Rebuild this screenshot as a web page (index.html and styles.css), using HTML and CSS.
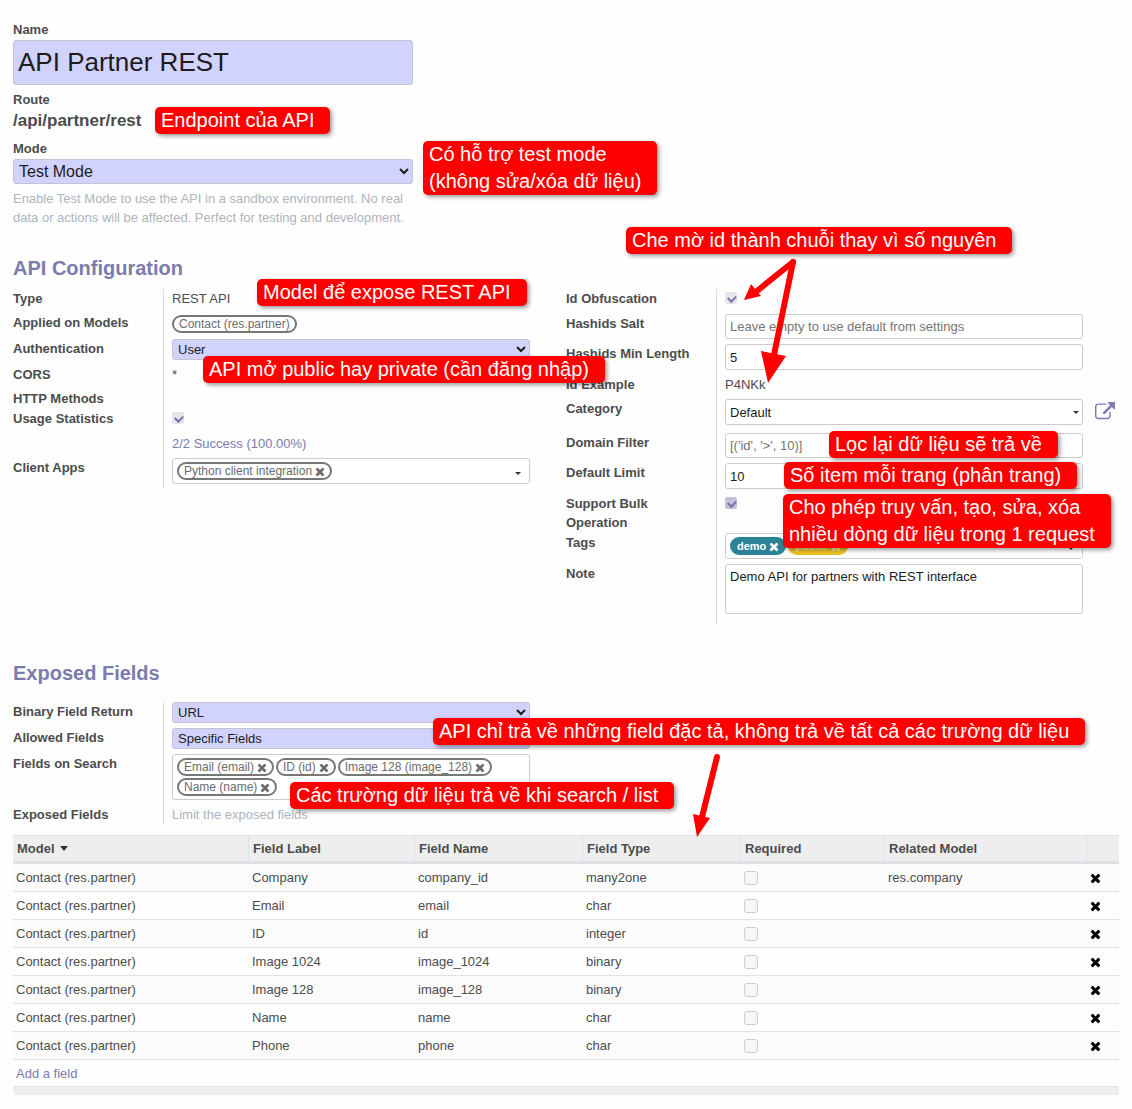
FILE: index.html
```html
<!DOCTYPE html>
<html lang="en">
  <head>
    <meta charset="UTF-8" />
    <meta name="viewport" content="width=device-width, initial-scale=1.0" />
    <title>API Partner REST</title>
    <link rel="stylesheet" href="styles.css" />
  </head>

  <body>
    <svg class="sprite" aria-hidden="true">
      <symbol id="times" viewBox="0 0 1408 1792">
        <path d="M1298 1322q0 40-28 68l-136 136q-28 28-68 28t-68-28l-294-294-294 294q-28 28-68 28t-68-28l-136-136q-28-28-28-68t28-68l294-294-294-294q-28-28-28-68t28-68l136-136q28-28 68-28t68 28l294 294 294-294q28-28 68-28t68 28l136 136q28 28 28 68t-28 68l-294 294 294 294q28 28 28 68z" />
      </symbol>
      <symbol id="external" viewBox="0 0 1792 1792">
        <path d="M1408 928v320q0 119-84.500 203.500t-203.500 84.500h-832q-119 0-203.500-84.500t-84.500-203.500v-832q0-119 84.500-203.500t203.500-84.500h704q14 0 23 9t9 23v64q0 14-9 23t-23 9h-704q-66 0-113 47t-47 113v832q0 66 47 113t113 47h832q66 0 113-47t47-113v-320q0-14 9-23t23-9h64q14 0 23 9t9 23zm384-864v512q0 26-19 45t-45 19-45-19l-176-176-652 652q-10 10-23 10t-23-10l-114-114q-10-10-10-23t10-23l652-652-176-176q-19-19-19-45t19-45 45-19h512q26 0 45 19t19 45z" />
      </symbol>
    </svg>

    <main class="sheet">
      <!-- title block -->
      <section class="title">
        <label for="name">Name</label>
        <input class="name" id="name" type="text" value="API Partner REST" />
        <span class="caption">Route</span>
        <div class="route">/api/partner/rest</div>
        <label for="mode">Mode</label>
        <select class="mode" id="mode">
          <option>Test Mode</option>
          <option>Production</option>
        </select>
        <p class="hint">
          Enable Test Mode to use the API in a sandbox environment. No real data
          or actions will be affected. Perfect for testing and development.
        </p>
        <div class="note note-endpoint">Endpoint của API</div>
        <div class="note note-mode">Có hỗ trợ test mode<br />(không sửa/xóa dữ liệu)</div>
      </section>

      <h2>API Configuration</h2>
      <section class="groups config">
        <div class="group">
          <div class="row">
            <span class="label">Type</span>
            <div class="value">REST API</div>
          </div>
          <div class="row">
            <span class="label">Applied on Models</span>
            <div class="value"><span class="tag">Contact (res.partner)</span></div>
          </div>
          <div class="row">
            <label class="label" for="auth">Authentication</label>
            <div class="value">
              <select class="field required" id="auth">
                <option>User</option>
                <option>Public</option>
              </select>
            </div>
          </div>
          <div class="row">
            <span class="label">CORS</span>
            <div class="value">*</div>
          </div>
          <div class="row empty">
            <span class="label">HTTP Methods</span>
            <div class="value"></div>
          </div>
          <div class="row">
            <label class="label" for="stats">Usage Statistics</label>
            <div class="value check"><input type="checkbox" id="stats" checked disabled /></div>
          </div>
          <div class="row">
            <span class="label"></span>
            <div class="value"><a href="#">2/2 Success (100.00%)</a></div>
          </div>
          <div class="row">
            <label class="label" for="clients">Client Apps</label>
            <div class="value">
              <div class="tags">
                <span class="tag">Python client integration <button aria-label="Remove"><svg><use href="#times" /></svg></button></span>
                <input type="text" id="clients" />
                <i class="caret"></i>
              </div>
            </div>
          </div>
          <div class="note note-model">Model để expose REST API</div>
          <div class="note note-auth">API mở public hay private (cần đăng nhập)</div>
        </div>

        <div class="group">
          <div class="row">
            <label class="label" for="obfuscation">Id Obfuscation</label>
            <div class="value check"><input type="checkbox" id="obfuscation" checked disabled /></div>
          </div>
          <div class="row">
            <label class="label" for="salt">Hashids Salt</label>
            <div class="value">
              <input class="field" type="text" id="salt" placeholder="Leave empty to use default from settings" />
            </div>
          </div>
          <div class="row">
            <label class="label" for="length">Hashids Min Length</label>
            <div class="value"><input class="field tall" type="text" id="length" value="5" /></div>
          </div>
          <div class="row">
            <span class="label">Id Example</span>
            <div class="value">P4NKk</div>
          </div>
          <div class="row category">
            <label class="label" for="category">Category</label>
            <div class="value">
              <input class="field tall" type="text" id="category" value="Default" />
              <i class="caret"></i>
              <button class="external" aria-label="Open category"><svg><use href="#external" /></svg></button>
            </div>
          </div>
          <div class="row">
            <label class="label" for="domain">Domain Filter</label>
            <div class="value">
              <input class="field" type="text" id="domain" placeholder="[('id', '&gt;', 10)]" />
            </div>
          </div>
          <div class="row">
            <label class="label" for="limit">Default Limit</label>
            <div class="value"><input class="field tall" type="text" id="limit" value="10" /></div>
          </div>
          <div class="row bulk">
            <label class="label" for="bulk">Support Bulk Operation</label>
            <div class="value check"><input class="active" type="checkbox" id="bulk" checked /></div>
          </div>
          <div class="row">
            <label class="label" for="tags">Tags</label>
            <div class="value">
              <div class="tags">
                <span class="tag teal">demo <button aria-label="Remove"><svg><use href="#times" /></svg></button></span>
                <span class="tag yellow">public <button aria-label="Remove"><svg><use href="#times" /></svg></button></span>
                <input type="text" id="tags" />
                <i class="caret"></i>
              </div>
            </div>
          </div>
          <div class="row last">
            <label class="label" for="note">Note</label>
            <div class="value">
              <textarea class="field" id="note">Demo API for partners with REST interface</textarea>
            </div>
          </div>

          <div class="note note-obfuscation">Che mờ id thành chuỗi thay vì số nguyên</div>
          <div class="note note-domain">Lọc lại dữ liệu sẽ trả về</div>
          <div class="note note-limit">Số item mỗi trang (phân trang)</div>
          <div class="note note-bulk">Cho phép truy vấn, tạo, sửa, xóa<br />nhiều dòng dữ liệu trong 1 request</div>
          <svg class="arrow arrow-id" viewBox="0 0 66 130">
            <path class="shaft" d="M53 7 L17 36" />
            <path d="M4 45 L11 29 L21 41 Z" />
            <path class="shaft" d="M53 7 L34 100" />
            <path d="M28 128 L21 96 L46 101 Z" />
          </svg>
        </div>
      </section>

      <h2 class="exposed-title">Exposed Fields</h2>
      <section class="groups exposed">
        <div class="group">
          <div class="row">
            <label class="label" for="binary">Binary Field Return</label>
            <div class="value">
              <select class="field required" id="binary">
                <option>URL</option>
                <option>Base64</option>
              </select>
            </div>
          </div>
          <div class="row">
            <label class="label" for="allowed">Allowed Fields</label>
            <div class="value">
              <select class="field required" id="allowed">
                <option>Specific Fields</option>
                <option>All Fields</option>
              </select>
            </div>
          </div>
          <div class="row">
            <label class="label" for="search">Fields on Search</label>
            <div class="value">
              <div class="tags">
                <span class="tag">Email (email) <button aria-label="Remove"><svg><use href="#times" /></svg></button></span>
                <span class="tag">ID (id) <button aria-label="Remove"><svg><use href="#times" /></svg></button></span>
                <span class="tag">Image 128 (image_128) <button aria-label="Remove"><svg><use href="#times" /></svg></button></span>
                <span class="tag">Name (name) <button aria-label="Remove"><svg><use href="#times" /></svg></button></span>
                <input type="text" id="search" />
                <i class="caret"></i>
              </div>
            </div>
          </div>
          <div class="row empty">
            <span class="label">Exposed Fields</span>
            <div class="value muted">Limit the exposed fields</div>
          </div>
        </div>
        <div class="note note-allowed">API chỉ trả về những field đặc tả, không trả về tất cả các trường dữ liệu</div>
        <div class="note note-search">Các trường dữ liệu trả về khi search / list</div>
        <svg class="arrow arrow-fields" viewBox="0 0 36 90">
          <path class="shaft" d="M27 6 L12 66" />
          <path d="M7 86 L3 63 L20 67 Z" />
        </svg>
      </section>

      <table>
        <colgroup>
          <col class="c-model" />
          <col class="c-label" />
          <col class="c-name" />
          <col class="c-type" />
          <col class="c-required" />
          <col />
          <col class="c-remove" />
        </colgroup>
        <thead>
          <tr>
            <th>Model <i class="caret sort"></i></th>
            <th>Field Label</th>
            <th>Field Name</th>
            <th>Field Type</th>
            <th>Required</th>
            <th>Related Model</th>
            <th></th>
          </tr>
        </thead>
        <tbody>
          <tr>
            <td>Contact (res.partner)</td>
            <td>Company</td>
            <td>company_id</td>
            <td>many2one</td>
            <td><input type="checkbox" aria-label="Required" disabled /></td>
            <td>res.company</td>
            <td><button aria-label="Delete"><svg><use href="#times" /></svg></button></td>
          </tr>
          <tr>
            <td>Contact (res.partner)</td>
            <td>Email</td>
            <td>email</td>
            <td>char</td>
            <td><input type="checkbox" aria-label="Required" disabled /></td>
            <td></td>
            <td><button aria-label="Delete"><svg><use href="#times" /></svg></button></td>
          </tr>
          <tr>
            <td>Contact (res.partner)</td>
            <td>ID</td>
            <td>id</td>
            <td>integer</td>
            <td><input type="checkbox" aria-label="Required" disabled /></td>
            <td></td>
            <td><button aria-label="Delete"><svg><use href="#times" /></svg></button></td>
          </tr>
          <tr>
            <td>Contact (res.partner)</td>
            <td>Image 1024</td>
            <td>image_1024</td>
            <td>binary</td>
            <td><input type="checkbox" aria-label="Required" disabled /></td>
            <td></td>
            <td><button aria-label="Delete"><svg><use href="#times" /></svg></button></td>
          </tr>
          <tr>
            <td>Contact (res.partner)</td>
            <td>Image 128</td>
            <td>image_128</td>
            <td>binary</td>
            <td><input type="checkbox" aria-label="Required" disabled /></td>
            <td></td>
            <td><button aria-label="Delete"><svg><use href="#times" /></svg></button></td>
          </tr>
          <tr>
            <td>Contact (res.partner)</td>
            <td>Name</td>
            <td>name</td>
            <td>char</td>
            <td><input type="checkbox" aria-label="Required" disabled /></td>
            <td></td>
            <td><button aria-label="Delete"><svg><use href="#times" /></svg></button></td>
          </tr>
          <tr>
            <td>Contact (res.partner)</td>
            <td>Phone</td>
            <td>phone</td>
            <td>char</td>
            <td><input type="checkbox" aria-label="Required" disabled /></td>
            <td></td>
            <td><button aria-label="Delete"><svg><use href="#times" /></svg></button></td>
          </tr>
          <tr>
            <td class="add" colspan="7"><a href="#">Add a field</a></td>
          </tr>
        </tbody>
        <tfoot>
          <tr>
            <td colspan="7"></td>
          </tr>
        </tfoot>
      </table>
    </main>
  </body>
</html>
```
FILE: styles.css
```css
* {
  margin: 0;
  padding: 0;
  box-sizing: border-box;
}

body {
  color: #4c4c4c;
  background: #fefefe;
  font: 13px/19px "Liberation Sans", Arial, sans-serif;
}

input,
select,
textarea {
  font: inherit;
  color: #1c1c1c;
}

button {
  border: none;
  background: none;
  color: inherit;
  cursor: pointer;
}

a {
  color: #7c7bad;
  text-decoration: none;
}

svg {
  fill: currentColor;
}

.sprite {
  display: none;
}

.sheet {
  padding: 20px 13px 14px;
}

/* title block */
.title {
  position: relative;
  width: 400px;
  display: flex;
  flex-direction: column;
}

.title label,
.caption {
  font-weight: bold;
}

.name {
  height: 45px;
  margin: 1px 0 5px;
  padding: 0 4px;
  font-size: 26px;
  border: 1px solid #c3c3d6;
  border-radius: 3px;
  background: #d2d2ff;
}

.route {
  margin: 2px 0 8px;
  font-size: 17px;
  line-height: 20px;
  font-weight: bold;
}

.mode {
  height: 25px;
  margin: 1px 0 5px;
  padding-left: 1px;
  font-size: 16px;
  border: 1px solid #c3c3d6;
  border-radius: 3px;
  background: #d2d2ff;
}

.hint,
.muted {
  color: #adb5bd;
}

h2 {
  margin: 29px 0 9px;
  color: #7c7bad;
  font-size: 20px;
  line-height: 24px;
}

h2.exposed-title {
  margin: 37px 0 17px;
}

/* form groups */
.groups {
  position: relative;
  display: grid;
  grid-template-columns: 1fr 1fr;
  align-items: start;
}

.group {
  position: relative;
}

.row {
  display: grid;
  grid-template-columns: 151px 1fr;
}

.row.empty {
  min-height: 20px;
}

.label {
  padding-right: 20px;
  font-weight: bold;
  border-right: 1px solid #ddd;
}

.value {
  position: relative;
  min-width: 0;
  margin: 0 36px 0 8px;
  padding-bottom: 5px;
}

.empty .value {
  padding: 0;
}

.category .value {
  padding-bottom: 8px;
}

.last .value {
  padding-bottom: 10px;
}

.bulk .value {
  padding-bottom: 0;
}

.bulk {
  min-height: 39px;
}

.field {
  display: block;
  width: 100%;
  height: 25px;
  padding: 0 4px;
  border: 1px solid #ccc;
  border-radius: 3px;
  background: #fff;
}

.field.tall {
  height: 26px;
}

.field.required {
  height: 21px;
  padding: 0 0 0 1px;
  background: #d2d2ff;
  border-color: #c3c3d6;
}

.field::placeholder {
  color: #757575;
}

textarea.field {
  height: 50px;
  padding: 2px 4px;
  resize: none;
}

.caret {
  position: absolute;
  right: 4px;
  top: 12px;
  border: 3px solid transparent;
  border-top-color: #333;
  border-bottom: 0;
}

.external {
  position: absolute;
  left: 370px;
  top: 3px;
  color: #7c7bad;
}

.external svg {
  display: block;
  width: 20px;
  height: 20px;
}

/* checkboxes */
.check {
  height: 25px;
  padding-top: 3px;
}

input[type="checkbox"] {
  position: relative;
  display: block;
  width: 12px;
  height: 12px;
  appearance: none;
  border-radius: 2px;
  background: #e5e5ee;
}

input[type="checkbox"].active {
  background: #c3c2dd;
}

input[type="checkbox"]:checked::before {
  content: "";
  position: absolute;
  left: 3px;
  top: 3px;
  width: 6px;
  height: 4px;
  border: solid #7574a5;
  border-width: 0 0 2px 2px;
  transform: rotate(-45deg);
}

/* many2many boxes */
.tags {
  position: relative;
  display: flex;
  flex-wrap: wrap;
  gap: 2px;
  min-height: 26px;
  padding: 3px 24px 3px 4px;
  border: 1px solid #ccc;
  border-radius: 3px;
  background: #fff;
}

.tags input {
  flex: 1;
  width: 20px;
  height: 18px;
  border: none;
  outline: none;
}

.tags .caret {
  right: 8px;
  top: auto;
  bottom: 8px;
}

.tag {
  display: inline-flex;
  align-items: center;
  gap: 3px;
  height: 18px;
  padding: 0 5px;
  color: #6c6c6c;
  font-size: 12px;
  line-height: 14px;
  border: 2px solid #777;
  border-radius: 9px;
  background: #fff;
}

.value > .tag {
  margin-top: 2px;
  vertical-align: top;
}

.row:has(.value > .tag) {
  height: 26px;
}

.tag svg,
td svg {
  display: block;
  width: 10px;
  height: 13px;
}

.teal,
.yellow {
  color: #fff;
  font-size: 11px;
  font-weight: bold;
  border-color: #2c8397;
  background: #2c8397;
}

.yellow {
  color: #fbe9a6;
  border-color: #ebc223;
  background: #ebc223;
}

/* lines table */
table {
  width: 100%;
  margin-top: 10px;
  table-layout: fixed;
  border-collapse: separate;
  border-spacing: 0;
}

.c-model {
  width: 236px;
}

.c-label {
  width: 166px;
}

.c-name {
  width: 168px;
}

.c-type {
  width: 158px;
}

.c-required {
  width: 144px;
}

.c-remove {
  width: 32px;
}

th {
  height: 29px;
  padding: 0 4px;
  text-align: left;
  background: #eee;
  border-top: 1px solid #dee2e6;
  border-right: 1px solid #dee2e6;
  border-bottom: 3px solid #dee2e6;
}

th:last-child {
  border-right: none;
}

.sort {
  display: inline-block;
  position: static;
  margin-left: 2px;
  vertical-align: 2px;
  border-width: 5px 4px 0;
}

td {
  height: 28px;
  padding: 0 3px;
  border-bottom: 1px solid #dee2e6;
}

td.add {
  height: 27px;
}

tbody tr:nth-child(odd) {
  background: #fbfbfb;
}

td input[type="checkbox"] {
  width: 14px;
  height: 14px;
  border: 1px solid #ccc;
  border-radius: 3px;
  background: #f6f6f6;
}

td button {
  display: block;
  color: #000;
}

td svg {
  width: 11px;
  height: 14px;
}

tfoot td {
  height: 8px;
  background: #eee;
  border-bottom: none;
}

/* annotations laid over the form */
.note {
  position: absolute;
  z-index: 2;
  padding: 0 16px 0 6px;
  color: #fff;
  font-size: 20px;
  line-height: 27px;
  white-space: nowrap;
  border-radius: 5px;
  background: #f00;
  box-shadow: 2px 2px 4px rgba(0, 0, 0, 0.4);
}

.note-endpoint {
  left: 142px;
  top: 87px;
}

.note-mode {
  left: 410px;
  top: 121px;
}

.note-model {
  left: 244px;
  top: -10px;
}

.note-auth {
  left: 190px;
  top: 67px;
}

.note-obfuscation {
  left: 60px;
  top: -62px;
}

.note-domain {
  left: 263px;
  top: 142px;
}

.note-limit {
  left: 218px;
  top: 173px;
}

.note-bulk {
  left: 217px;
  top: 205px;
}

.note-allowed {
  left: 420px;
  top: 16px;
}

.note-search {
  left: 277px;
  top: 80px;
}

.arrow {
  position: absolute;
  z-index: 2;
  color: #f00;
}

.shaft {
  stroke: #f00;
  stroke-width: 6;
  stroke-linecap: round;
}

.arrow-id {
  left: 174px;
  top: -34px;
  width: 66px;
  height: 130px;
}

.arrow-fields {
  left: 677px;
  top: 49px;
  width: 36px;
  height: 90px;
}
```
